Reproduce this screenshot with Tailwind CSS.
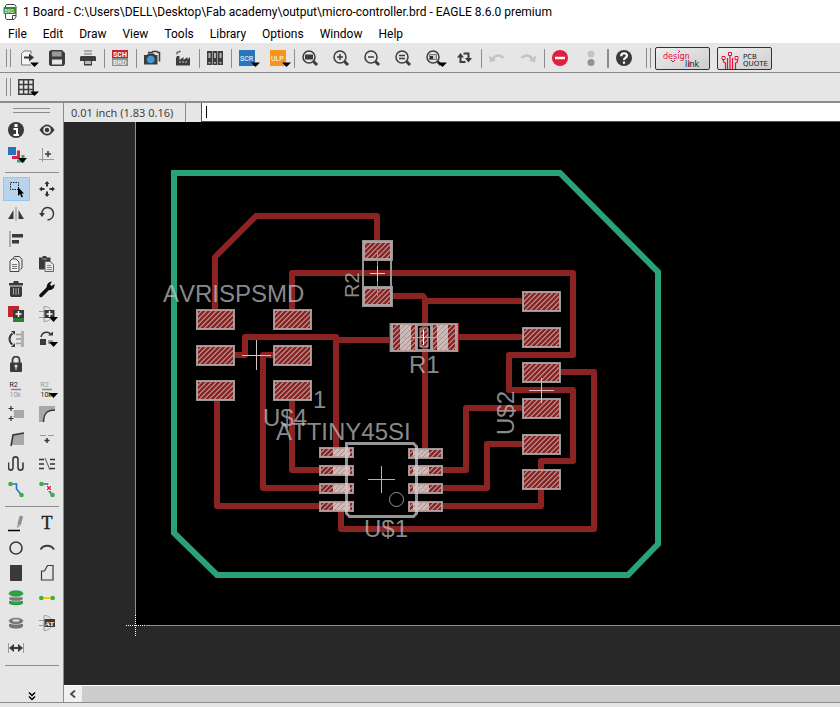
<!DOCTYPE html>
<html lang="en">
  <head>
    <meta charset="UTF-8" />
    <meta name="viewport" content="width=device-width, initial-scale=1.0" />
    <title>1 Board - EAGLE 8.6.0 premium</title>
    <script src="https://cdn.jsdelivr.net/npm/@tailwindcss/browser@4"></script>
  </head>

  <body class="flex flex-col h-screen overflow-hidden bg-[#e6e6e6] font-['Roboto','Open_Sans',sans-serif] text-xs text-black">
    <!-- Title bar -->
    <header class="flex items-center h-6 gap-1 pl-[3px] bg-white shrink-0">
      <svg class="w-4 h-[18px]" viewBox="0 0 16 18">
        <path d="M3.5 1.5h8l1.500 1.500v11l-2 2.500h-7.500l-1-1.500v-12z" fill="#fff" stroke="#444" />
        <path d="M9.500 16v-3.500h3.500" fill="none" stroke="#444" />
        <rect x="0.500" y="4" width="12.500" height="7" rx="1" fill="#2e8b33" />
        <text x="1.500" y="9.500" font-size="5" font-weight="bold" fill="#cfe8cf">BRD</text>
      </svg>
      <h1 class="whitespace-nowrap">1 Board - C:\Users\DELL\Desktop\Fab academy\output\micro-controller.brd - EAGLE 8.6.0 premium</h1>
    </header>

    <!-- Menu -->
    <nav class="flex items-center h-[19px] gap-4 pl-2 bg-white shrink-0">
      <button>File</button>
      <button>Edit</button>
      <button>Draw</button>
      <button>View</button>
      <button>Tools</button>
      <button>Library</button>
      <button>Options</button>
      <button>Window</button>
      <button>Help</button>
    </nav>

    <!-- Shared symbols -->
    <svg class="absolute w-0 h-0">
      <defs>
        <path id="drop" d="M12 12.500h9l-4.500 4.500z" fill="#000" />
        <g id="lens">
          <circle cx="7" cy="7" r="6" fill="none" stroke="#3c3c3c" stroke-width="1.500" />
          <path d="M11.500 11.500l3.500 3.500" stroke="#3c3c3c" stroke-width="3" />
        </g>
      </defs>
    </svg>

    <!-- Action toolbar -->
    <div class="flex h-[30px] border-b border-[#8c8c8c] shrink-0">
      <div class="w-[5px] h-[18px] ml-[6px] mt-[6px] border-x border-[#8c8c8c]"></div>
      <button aria-label="Open" class="w-[31px] pl-[7px] pt-[2px]">
        <svg class="w-[22px] h-[18px] overflow-visible" viewBox="0 0 22 18">
          <path d="M13 4v-3h-7l-2.500 2.500v11.500h9.500" fill="#f4f4f4" stroke="#777" />
          <path d="M6 7.500h6" stroke="#333" stroke-width="2" /><path d="M11 3.500l5 4-5 4z" fill="#333" />
          <use href="#drop" />
        </svg>
      </button>
      <button aria-label="Save" class="w-[31px] pl-[7px] pt-[2px]">
        <svg class="w-[22px] h-[18px]" viewBox="0 0 22 18">
          <path d="M2 0h11l3 3v11l-1.500 2h-13l-1.500-1.500v-13z" fill="#3c3c3c" />
          <path d="M3 1.500h9.500v5h-9.500z" fill="#9a9a9a" /><path d="M3 9.500h10v5h-10z" fill="#e6e6e6" />
        </svg>
      </button>
      <button aria-label="Print" class="w-[31px] pl-[7px] pt-[2px]">
        <svg class="w-[22px] h-[18px]" viewBox="0 0 22 18">
          <path d="M4 0h8v5h-8z" fill="#aaa" /><path d="M4 2.500h8" stroke="#ddd" />
          <path d="M1 6h14l1 1v4h-16v-4z" fill="#3c3c3c" /><path d="M4 10h8v5.500h-8z" fill="#3c3c3c" />
          <path d="M5 11h6v3h-6z" fill="#bbb" />
        </svg>
      </button>
      <div class="w-px h-[19px] mt-[6px] bg-[#8c8c8c]"></div>
      <button aria-label="Schematic" class="w-[31px] pl-[7px] pt-[2px]">
        <svg class="w-[22px] h-[18px]" viewBox="0 0 22 18">
          <path d="M0 0h16v8h-16z" fill="#c8202e" /><path d="M0 8h16v8h-16z" fill="#8f8f8f" />
          <text x="1" y="7" font-size="7" font-weight="bold" fill="#fff">SCH</text>
          <text x="1" y="15" font-size="7" font-weight="bold" fill="#eee">BRD</text>
        </svg>
      </button>
      <div class="w-px h-[19px] mt-[6px] bg-[#8c8c8c]"></div>
      <button aria-label="CAM snapshot" class="w-[31px] pl-[7px] pt-[2px]">
        <svg class="w-[22px] h-[18px]" viewBox="0 0 22 18">
          <path d="M4 2.500h4l1-1h4l1 1h1.500v9" fill="none" stroke="#3c3c3c" stroke-width="1.500" />
          <path d="M0 5h3l1-1.500h6l1 1.500h2.500v9.500h-13.500z" fill="#3c3c3c" />
          <circle cx="6.700" cy="9.500" r="3.800" fill="#3c9bd8" />
        </svg>
      </button>
      <button aria-label="CAM processor" class="w-[31px] pl-[7px] pt-[2px]">
        <svg class="w-[22px] h-[18px]" viewBox="0 0 22 18">
          <path d="M1 15.500v-7.500l1-2h2.500v4l4-3v3l4-3v2.500l2.500-2.500v8.500z" fill="#3c3c3c" />
          <path d="M2 4.500v-2.500h3v-1.500" fill="none" stroke="#3c3c3c" />
          <path d="M4 12h2m1 0h2m1 0h2" stroke="#999" stroke-width="1.500" />
        </svg>
      </button>
      <div class="w-px h-[19px] mt-[6px] bg-[#8c8c8c]"></div>
      <button aria-label="Libraries" class="w-[31px] pl-[7px] pt-[2px]">
        <svg class="w-[22px] h-[18px]" viewBox="0 0 22 18">
          <path d="M0 1h5v14h-5zM5.500 1h5v14h-5zM11 1h5v14h-5z" fill="#3c3c3c" />
          <path d="M1.500 3h2v5h-2zM7 3h2v5h-2zM12.500 3h2v5h-2z" fill="#b4b4b4" />
          <path d="M1.500 12h2v1.500h-2zM7 12h2v1.500h-2zM12.500 12h2v1.500h-2z" fill="#b4b4b4" />
        </svg>
      </button>
      <div class="w-px h-[19px] mt-[6px] bg-[#8c8c8c]"></div>
      <button aria-label="Run script" class="w-[31px] pl-[7px] pt-[2px]">
        <svg class="w-[22px] h-[18px] overflow-visible" viewBox="0 0 22 18">
          <path d="M0 0h16v16h-16z" fill="#2a76bc" />
          <text x="1" y="11" font-size="7" fill="#fff">SCR</text>
          <use href="#drop" />
        </svg>
      </button>
      <button aria-label="Run ULP" class="w-[31px] pl-[7px] pt-[2px]">
        <svg class="w-[22px] h-[18px] overflow-visible" viewBox="0 0 22 18">
          <path d="M0 0h16v16h-16z" fill="#f7941d" />
          <text x="1" y="11" font-size="7" fill="#fff">ULP</text>
          <use href="#drop" />
        </svg>
      </button>
      <div class="w-px h-[19px] mt-[6px] bg-[#8c8c8c]"></div>
      <button aria-label="Zoom to fit" class="w-[31px] pl-[7px] pt-[2px]">
        <svg class="w-[22px] h-[18px]" viewBox="0 0 22 18"><use href="#lens" /><path d="M3 4.500h8v5h-8z" fill="#3c3c3c" /></svg>
      </button>
      <button aria-label="Zoom in" class="w-[31px] pl-[7px] pt-[2px]">
        <svg class="w-[22px] h-[18px]" viewBox="0 0 22 18"><use href="#lens" /><path d="M4 7h6M7 4v6" stroke="#3c3c3c" stroke-width="1.500" /></svg>
      </button>
      <button aria-label="Zoom out" class="w-[31px] pl-[7px] pt-[2px]">
        <svg class="w-[22px] h-[18px]" viewBox="0 0 22 18"><use href="#lens" /><path d="M4 7h6" stroke="#3c3c3c" stroke-width="1.500" /></svg>
      </button>
      <button aria-label="Redraw" class="w-[31px] pl-[7px] pt-[2px]">
        <svg class="w-[22px] h-[18px]" viewBox="0 0 22 18"><use href="#lens" /><path d="M4 5.500h6M4 8.500h6" stroke="#3c3c3c" stroke-width="1.500" /></svg>
      </button>
      <button aria-label="Zoom select" class="w-[31px] pl-[7px] pt-[2px]">
        <svg class="w-[22px] h-[18px] overflow-visible" viewBox="0 0 22 18">
          <use href="#lens" /><path d="M3.500 4.500h7v5h-7z" fill="#ccc" stroke="#777" /><path d="M4 6h3v3h-3z" fill="#333" />
          <use href="#drop" />
        </svg>
      </button>
      <button aria-label="Refresh" class="w-[31px] pl-[7px] pt-[2px]">
        <svg class="w-[22px] h-[18px]" viewBox="0 0 22 18">
          <path d="M3.500 7v5h5M6.500 3.500h5v5" fill="none" stroke="#3c3c3c" stroke-width="2" />
          <path d="M0 7.500l3.500-4.500 3.500 4.500zM8 8l3.500 4.500 3.500-4.500z" fill="#3c3c3c" />
        </svg>
      </button>
      <div class="w-px h-[19px] mt-[6px] bg-[#8c8c8c]"></div>
      <button aria-label="Undo" class="w-[31px] pl-[7px] pt-[2px]">
        <svg class="w-[22px] h-[18px]" viewBox="0 0 22 18">
          <path d="M4 9c2-4 7-5 10.500-1" fill="none" stroke="#c3c3c3" stroke-width="2.500" /><path d="M0 5.500l1 7 6-2z" fill="#c3c3c3" />
        </svg>
      </button>
      <button aria-label="Redo" class="w-[31px] pl-[7px] pt-[2px]">
        <svg class="w-[22px] h-[18px]" viewBox="0 0 22 18">
          <path d="M1.500 8c3.500-4 8.500-3 10.500 1" fill="none" stroke="#c3c3c3" stroke-width="2.500" /><path d="M16 5.500l-1 7-6-2z" fill="#c3c3c3" />
        </svg>
      </button>
      <div class="w-px h-[19px] mt-[6px] bg-[#8c8c8c]"></div>
      <button aria-label="Stop" class="w-[31px] pl-[7px] pt-[2px]">
        <svg class="w-[22px] h-[18px]" viewBox="0 0 22 18"><circle cx="8" cy="8" r="8" fill="#e0203c" /><path d="M3 8h10" stroke="#fff" stroke-width="2.500" /></svg>
      </button>
      <button aria-label="Go" class="w-[31px] pl-[7px] pt-[2px]">
        <svg class="w-[22px] h-[18px]" viewBox="0 0 22 18"><circle cx="8" cy="4" r="3.500" fill="#c4c4c4" /><circle cx="8" cy="12.500" r="3.500" fill="#929292" /></svg>
      </button>
      <div class="w-[2px] h-[19px] mt-[6px] bg-[#8c8c8c]"></div>
      <button aria-label="Help" class="w-[31px] pl-[7px] pt-[2px]">
        <svg class="w-[22px] h-[18px]" viewBox="0 0 22 18">
          <circle cx="8" cy="8" r="8" fill="#3a3a3a" />
          <path d="M5.200 6.200c0-4 5.800-3.700 5.800-.5 0 2-3 2-3 4.300M8 11.500v2.300" fill="none" stroke="#fff" stroke-width="2.200" />
        </svg>
      </button>
      <div class="w-[5px] h-5 ml-[6px] mt-[5px] border-x border-[#8c8c8c]"></div>
      <button aria-label="design link" class="w-[55px] h-[23px] ml-1 mt-1 rounded-[2px] border border-[#333] bg-linear-to-br from-[#eee] to-[#ccc]">
        <svg class="w-[53px] h-[21px]" viewBox="0 0 53 21" font-family="DejaVu Sans">
          <text x="7" y="11" font-size="8" fill="#e0113a">design</text>
          <text x="29" y="19" font-size="8" fill="#111">link</text>
          <path d="M15 12l2 2 2-2M22.500 2.500l1.500 1.500M33 13v6" fill="none" stroke="#e0113a" />
        </svg>
      </button>
      <button aria-label="PCB quote" class="w-[55px] h-[23px] ml-[7px] mt-1 rounded-[2px] border border-[#333] bg-linear-to-br from-[#eee] to-[#ccc]">
        <svg class="w-[53px] h-[21px]" viewBox="0 0 53 21" font-family="DejaVu Sans">
          <path d="M5.500 12v2l2 1v6M9.500 21v-11M12 21v-13M14.500 21v-11M19.500 12v2l-2 1v6" fill="none" stroke="#e0113a" stroke-width="1.200" />
          <path d="M4 8.500h3v3h-3zM10.500 4.500h3v3h-3zM17 8.500h3v3h-3z" fill="#fff" stroke="#e0113a" />
          <text x="25" y="11" font-size="7" fill="#222">PCB</text>
          <text x="25" y="18" font-size="7" fill="#222">QUOTE</text>
        </svg>
      </button>
    </div>

    <!-- Parameter toolbar -->
    <div class="flex h-[30px] border-b-2 border-[#8c8c8c] shrink-0">
      <div class="w-[5px] h-[18px] ml-[6px] mt-[5px] border-x border-[#8c8c8c]"></div>
      <button aria-label="Grid" class="w-[31px] pl-[7px] pt-[2px]">
        <svg class="w-[22px] h-[18px] overflow-visible" viewBox="0 0 22 18">
          <path d="M.8 0v16M5.600 0v16M10.400 0v16M15.200 0v16M0 .8h16M0 5.600h16M0 10.400h16M0 15.200h16" stroke="#3c3c3c" stroke-width="1.500" />
          <use href="#drop" />
        </svg>
      </button>
    </div>

    <main class="flex flex-1 min-h-0">
      <!-- Command palette -->
      <aside class="flex flex-col w-16 pt-[5px] border-r border-[#8c8c8c] shrink-0">
        <div class="h-[5px] mx-[13px] border-y border-[#8c8c8c] shrink-0"></div>

        <div class="grid grid-cols-[27px_27px] auto-rows-[25px] gap-x-1 pl-[3px] mt-[5px]">
          <button aria-label="Info" class="pl-[5px]">
            <svg class="w-[22px] h-[18px]" viewBox="0 0 22 18"><circle cx="8" cy="8" r="8" fill="#3a3a3a" /><path d="M8 2v3" stroke="#fff" stroke-width="3" /><path d="M5.500 7h3.500v5.500M5.500 13h5.500" fill="none" stroke="#fff" stroke-width="2" /></svg>
          </button>
          <button aria-label="Show" class="pl-[5px]">
            <svg class="w-[22px] h-[18px]" viewBox="0 0 22 18"><path d="M0.500 8q7.500-11 15 0q-7.500 11-15 0" fill="#3a3a3a" /><circle cx="8" cy="8" r="3" fill="none" stroke="#e6e6e6" stroke-width="1.500" /></svg>
          </button>
          <button aria-label="Layers" class="pl-[5px]">
            <svg class="w-[22px] h-[18px] overflow-visible" viewBox="0 0 22 18">
              <path d="M9 14h6v-6" fill="none" stroke="#34a86a" stroke-width="3" /><path d="M4 10.500h6.500v-7" fill="none" stroke="#e0204c" stroke-width="3" />
              <path d="M0 0h8v8h-8z" fill="#2a72bc" /><path d="M10 11h9l-4.500 5z" />
            </svg>
          </button>
          <button aria-label="Mark" class="pl-[5px]">
            <svg class="w-[22px] h-[18px]" viewBox="0 0 22 18"><path d="M3.500 1v14M0 12.500h15" stroke="#999" /><path d="M9 4v6M6 7h6" stroke="#3a3a3a" stroke-width="1.500" /></svg>
          </button>
        </div>

        <div class="h-px my-1 ml-[5px] mr-1 bg-[#8c8c8c] shrink-0"></div>

        <div class="grid grid-cols-[27px_27px] auto-rows-[25px] gap-x-1 pl-[3px]">
          <button aria-label="Select" class="pl-1 h-6 border border-[#90c8f6] bg-[#b8d4ec]">
            <svg class="w-[22px] h-[18px]" viewBox="0 0 22 18"><path d="M2.500 2.500h8v7h-8z" fill="none" stroke="#222" stroke-dasharray="1.500 1" /><path d="M10 7v9l2-2 1.500 3.500 1.500-.7-1.500-3.300h2.500z" /></svg>
          </button>
          <button aria-label="Move" class="pl-[5px]">
            <svg class="w-[22px] h-[18px]" viewBox="0 0 22 18"><path d="M8 0l2.500 3h-1.500v2.500h-2v-2.500h-1.500zM8 16l2.500-3h-1.500v-2.500h-2v2.500h-1.500zM0 8l3-2.500v1.500h2.500v2h-2.500v1.500zM16 8l-3-2.500v1.500h-2.500v2h2.500v1.500z" fill="#333" /></svg>
          </button>
          <button aria-label="Mirror" class="pl-[5px]">
            <svg class="w-[22px] h-[18px]" viewBox="0 0 22 18"><path d="M0 13l5.500-9v9zM16 13l-5.500-9v9z" fill="#3a3a3a" /><path d="M8 1v14" stroke="#aaa" stroke-width="1.500" /></svg>
          </button>
          <button aria-label="Rotate" class="pl-[5px]">
            <svg class="w-[22px] h-[18px]" viewBox="0 0 22 18"><path d="M3 8.500c-.5-4 2-7 5.500-7s6 3 6 6-2 6-6 6.500" fill="none" stroke="#3a3a3a" stroke-width="1.500" /><path d="M0 7h6l-3 4z" fill="#3a3a3a" /></svg>
          </button>
          <button aria-label="Align" class="pl-[5px] col-span-2">
            <svg class="w-[22px] h-[18px]" viewBox="0 0 22 18"><path d="M2 0v16" stroke="#999" stroke-width="1.500" /><path d="M4 3h11v3.500h-11zM4 9h7v3.500h-7z" fill="#3a3a3a" /></svg>
          </button>
          <button aria-label="Copy" class="pl-[5px]">
            <svg class="w-[22px] h-[18px]" viewBox="0 0 22 18"><path d="M5 2.500l1.500-2h5l2.500 3v8.500l-1.500 1.500" fill="none" stroke="#444" /><path d="M2 5l2-2h4l3 3v9.500h-9z" fill="#f0f0f0" stroke="#444" /><path d="M4 8.500h5M4 10.500h5M4 12.500h5" stroke="#777" /></svg>
          </button>
          <button aria-label="Paste" class="pl-[5px]">
            <svg class="w-[22px] h-[18px]" viewBox="0 0 22 18"><path d="M0 1.500h3l1-1.500h3l1 1.500h3.500v12h-11.500z" fill="#3a3a3a" /><path d="M3 3h5" stroke="#999" /><path d="M6 5.500h5l3.500 3v7h-8.500z" fill="#e6e6e6" stroke="#666" /><path d="M8 9.500h4M8 11.500h5M8 13.500h5" stroke="#888" /></svg>
          </button>
          <button aria-label="Delete" class="pl-[5px]">
            <svg class="w-[22px] h-[18px]" viewBox="0 0 22 18"><path d="M1 2h4l1-2h4l1 2h4v2.500h-14zM2 5.500h12v9l-1 1.500h-10l-1-1.500z" fill="#3a3a3a" /><path d="M5.500 7v6.500M8 7v6.500M10.500 7v6.500" stroke="#aaa" /></svg>
          </button>
          <button aria-label="Change" class="pl-[5px]">
            <svg class="w-[22px] h-[18px]" viewBox="0 0 22 18"><path d="M2 14.500l8-8" stroke="#111" stroke-width="3.500" stroke-linecap="round" /><path d="M8 7.500c-1-3.500 1-6.500 5-7l-2 3 1.500 1.500 3-2c.5 4-2.500 6.500-6 6z" fill="#111" /></svg>
          </button>
          <button aria-label="Add" class="pl-[5px]">
            <svg class="w-[22px] h-[18px]" viewBox="0 0 22 18"><path d="M0 0h11v11h-11z" fill="#c0272d" /><path d="M5 9h11v7h-11z" fill="#2e8030" /><path d="M5 4h11v8h-11z" fill="#3a3a3a" /><path d="M10.500 5v6M7.500 8h6" stroke="#fff" stroke-width="1.500" /></svg>
          </button>
          <button aria-label="Invoke gate" class="pl-[5px]">
            <svg class="w-[22px] h-[18px] overflow-visible" viewBox="0 0 22 18"><path d="M0 5.500h6M0 11.500h6M5 .5v15c5 0 8-3 8-7.500s-3-7.500-8-7.500" fill="none" stroke="#999" /><path d="M5.500 4h10v8h-10z" fill="#3a3a3a" /><path d="M10.500 5v6M7.500 8h6" stroke="#fff" stroke-width="1.500" /><path d="M10 11h9l-4.500 5z" /></svg>
          </button>
          <button aria-label="Pinswap" class="pl-[5px]">
            <svg class="w-[22px] h-[18px]" viewBox="0 0 22 18"><path d="M4.500 2.500c-4 3-4 8 0 11" fill="none" stroke="#3a3a3a" stroke-width="2" /><path d="M3 0h4v4zM3 16h4v-4z" fill="#3a3a3a" /><path d="M8 3.500h5M8 8h5M8 12.500h5" stroke="#999" stroke-width="1.500" /><path d="M13 0h3v16h-3z" fill="#b0b0b0" /></svg>
          </button>
          <button aria-label="Replace" class="pl-[5px]">
            <svg class="w-[22px] h-[18px] overflow-visible" viewBox="0 0 22 18"><path d="M2 6c1.500-6 8-6 10-2" fill="none" stroke="#3a3a3a" stroke-width="1.500" /><path d="M9 4.500h5v-4z" fill="#3a3a3a" /><path d="M1 8h6v6h-6z" fill="#3a3a3a" /><path d="M9 9h5v4h-5z" fill="#999" /><path d="M10 11h9l-4.500 5z" /></svg>
          </button>
          <button aria-label="Lock" class="pl-[5px] col-span-2">
            <svg class="w-[22px] h-[18px]" viewBox="0 0 22 18"><path d="M4.500 8v-4c0-4.500 7-4.500 7 0v4" fill="none" stroke="#3a3a3a" stroke-width="1.800" /><rect x="2" y="6.500" width="12" height="9.500" rx="1" fill="#3a3a3a" /><circle cx="8" cy="10" r="1.500" fill="#ddd" /><path d="M8 10v4" stroke="#ddd" /></svg>
          </button>
          <button aria-label="Name" class="pl-[5px]">
            <svg class="w-[22px] h-[18px]" viewBox="0 0 22 18"><text x="1.500" y="6" font-size="7" fill="#222">R2</text><path d="M3 8.500h10" stroke="#888" stroke-width="1.500" /><text x="1.500" y="16" font-size="7" fill="#999">10k</text></svg>
          </button>
          <button aria-label="Value" class="pl-[5px]">
            <svg class="w-[22px] h-[18px] overflow-visible" viewBox="0 0 22 18"><text x="1.500" y="6" font-size="7" fill="#999">R2</text><path d="M3 8.500h10" stroke="#888" stroke-width="1.500" /><text x="1.500" y="16" font-size="7" fill="#222">10k</text><path d="M10 12h9l-4.500 5z" /></svg>
          </button>
          <button aria-label="Smash" class="pl-[5px]">
            <svg class="w-[22px] h-[18px]" viewBox="0 0 22 18"><path d="M3 0v5M.5 2.500h5M3 10v5M.5 12.500h5" stroke="#333" stroke-width="1.200" /><path d="M6 4h10v8h-10z" fill="#aba7a7" /><path d="M5 5.500h11M5 10.500h11" stroke="#aba7a7" stroke-dasharray="2 1" /></svg>
          </button>
          <button aria-label="Miter" class="pl-[5px]">
            <svg class="w-[22px] h-[18px]" viewBox="0 0 22 18"><path d="M0 0h16v4c-8 0-12 3-12 12h-4z" fill="#aba7a7" /><path d="M4.500 16c0-8 3-12 11.500-12" fill="none" stroke="#333" stroke-width="1.500" /></svg>
          </button>
          <button aria-label="Split" class="pl-[5px]">
            <svg class="w-[22px] h-[18px]" viewBox="0 0 22 18"><path d="M5 4l11-2v12h-13z" fill="#aba7a7" /><path d="M3 15l2-11 11-2" fill="none" stroke="#333" stroke-width="1.500" /></svg>
          </button>
          <button aria-label="Optimize" class="pl-[5px]">
            <svg class="w-[22px] h-[18px]" viewBox="0 0 22 18"><path d="M1 4.500h6M9 4.500h6" stroke="#999" /><path d="M8 7v5M5.500 9.500h5" stroke="#333" stroke-width="1.500" /></svg>
          </button>
          <button aria-label="Meander" class="pl-[5px]">
            <svg class="w-[22px] h-[18px]" viewBox="0 0 22 18"><path d="M.5 6.500v5c0 3.500 4.500 3.500 4.500 0v-8c0-3.500 5-3.500 5 0v8c0 3.500 5 3.500 5 0v-5" fill="none" stroke="#3a3a3a" stroke-width="1.600" /></svg>
          </button>
          <button aria-label="Differential pair" class="pl-[5px]">
            <svg class="w-[22px] h-[18px]" viewBox="0 0 22 18"><path d="M0 3.500h5M0 8h5M0 12.500h5M11 3.500h5M11 8h5M11 12.500h5" stroke="#333" stroke-width="1.300" /><path d="M6 2l5 12" stroke="#555" /></svg>
          </button>
          <button aria-label="Route" class="pl-[5px]">
            <svg class="w-[22px] h-[18px]" viewBox="0 0 22 18"><path d="M2 3h6.500v5l5 6" fill="none" stroke="#2a72bc" stroke-width="1.600" /><circle cx="2.500" cy="3" r="2.300" fill="#3fae3f" /><circle cx="13.500" cy="14" r="2.300" fill="#3fae3f" /></svg>
          </button>
          <button aria-label="Ripup" class="pl-[5px]">
            <svg class="w-[22px] h-[18px]" viewBox="0 0 22 18"><path d="M2 3h6.500v5l5 6" fill="none" stroke="#2a72bc" stroke-width="1.600" /><path d="M7 4h6v6h-6z" fill="#fff" /><path d="M8 5l4 4M12 5l-4 4" stroke="#e0203c" stroke-width="1.600" /><circle cx="2.500" cy="3" r="2.300" fill="#3fae3f" /><circle cx="13.500" cy="14" r="2.300" fill="#3fae3f" /></svg>
          </button>
        </div>

        <div class="h-px my-1 ml-[5px] mr-1 bg-[#8c8c8c] shrink-0"></div>

        <div class="grid grid-cols-[27px_27px] auto-rows-[25px] gap-x-1 pl-[3px]">
          <button aria-label="Line" class="pl-[5px]">
            <svg class="w-[22px] h-[18px]" viewBox="0 0 22 18"><path d="M13.500 1l-2.500 9" stroke="#8f8f8f" stroke-width="3.500" /><path d="M9.500 10l2 1-2 2z" fill="#777" /><path d="M0 15.500h12" stroke="#000" stroke-width="1.500" /></svg>
          </button>
          <button aria-label="Text" class="pl-[5px]">
            <svg class="w-[22px] h-[18px]" viewBox="0 0 22 18"><text x="8" y="14" font-size="18" font-family="Liberation Serif" text-anchor="middle" fill="#222" stroke="#222" stroke-width=".4">T</text></svg>
          </button>
          <button aria-label="Circle" class="pl-[5px]">
            <svg class="w-[22px] h-[18px]" viewBox="0 0 22 18"><circle cx="8" cy="8" r="6" fill="none" stroke="#3a3a3a" stroke-width="1.600" /></svg>
          </button>
          <button aria-label="Arc" class="pl-[5px]">
            <svg class="w-[22px] h-[18px]" viewBox="0 0 22 18"><path d="M1.500 9.500c3-5 10.500-5 13.500 0" fill="none" stroke="#3a3a3a" stroke-width="2" /></svg>
          </button>
          <button aria-label="Rect" class="pl-[5px]">
            <svg class="w-[22px] h-[18px]" viewBox="0 0 22 18"><path d="M2 0h12v16h-12z" fill="#3a3a3a" /></svg>
          </button>
          <button aria-label="Polygon" class="pl-[5px]">
            <svg class="w-[22px] h-[18px]" viewBox="0 0 22 18"><path d="M2.500 15v-9h3l3-5.500h5.500v14.500z" fill="none" stroke="#3a3a3a" stroke-width="1.200" /></svg>
          </button>
          <button aria-label="Via" class="pl-[5px]">
            <svg class="w-[22px] h-[18px]" viewBox="0 0 22 18"><path d="M1 11v2c0 3 14 3 14 0v-2z" fill="#2f9e44" /><path d="M1 7v2c0 3 14 3 14 0v-2z" fill="#777" stroke="#e6e6e6" stroke-width=".6" /><ellipse cx="8" cy="3.500" rx="7.500" ry="3.500" fill="#2f9e44" stroke="#e6e6e6" stroke-width=".5" /></svg>
          </button>
          <button aria-label="Signal" class="pl-[5px]">
            <svg class="w-[22px] h-[18px]" viewBox="0 0 22 18"><path d="M2 8h12" stroke="#f8c800" stroke-width="2" /><circle cx="2.300" cy="8" r="2.300" fill="#3fae3f" /><circle cx="13.700" cy="8" r="2.300" fill="#3fae3f" /></svg>
          </button>
          <button aria-label="Hole" class="pl-[5px]">
            <svg class="w-[22px] h-[18px]" viewBox="0 0 22 18"><path d="M1 9v2c0 3.500 14 3.500 14 0v-2z" fill="#777" /><ellipse cx="8" cy="6" rx="7.500" ry="3.500" fill="#777" stroke="#e6e6e6" stroke-width=".6" /><ellipse cx="8" cy="5.500" rx="3.500" ry="1.200" fill="#ddd" /></svg>
          </button>
          <button aria-label="Attribute" class="pl-[5px]">
            <svg class="w-[22px] h-[18px]" viewBox="0 0 22 18"><path d="M0 5.500h6M0 10.500h6M5 .5v15c5 0 8-3 8-7.500s-3-7.500-8-7.500" fill="none" stroke="#999" /><path d="M5.500 4h10.500v8h-10.500z" fill="#3a3a3a" /><text x="6" y="11" font-size="7" font-family="Liberation Serif" font-weight="bold" fill="#fff">AT</text></svg>
          </button>
          <button aria-label="Dimension" class="pl-[5px] col-span-2">
            <svg class="w-[22px] h-[18px]" viewBox="0 0 22 18"><path d="M.5 3v10M15.500 3v10" stroke="#999" /><path d="M4 8h8" stroke="#3a3a3a" stroke-width="2" /><path d="M1 8l5-4v8zM15 8l-5-4v8z" fill="#3a3a3a" /></svg>
          </button>
        </div>

        <div class="h-px mt-1 ml-[5px] mr-1 bg-[#8c8c8c] shrink-0"></div>
        <button aria-label="More" class="mt-auto mb-px self-center">
          <svg class="w-2 h-[9px]" viewBox="0 0 8 9"><path d="M1 .5l3 3 3-3M1 4.500l3 3 3-3" fill="none" stroke="#000" stroke-width="1.500" /></svg>
        </button>
      </aside>

      <section class="flex flex-col flex-1 min-w-0">
        <!-- Coordinates and command line -->
        <div class="flex h-[19px] shrink-0">
          <label for="command" class="w-[122px] pl-[7px] border-r border-[#8c8c8c] font-['Noto_Sans',sans-serif] text-[11px] leading-[20px] text-[#444] whitespace-nowrap">0.01 inch (1.83 0.16)</label>
          <div class="flex items-center flex-1 min-w-0 ml-[15px] pl-1 bg-white border-l border-b border-[#555]">
            <span class="w-px h-3 bg-black"></span>
            <input id="command" type="text" class="flex-1 min-w-0 h-full outline-none" />
          </div>
        </div>

        <!-- Board -->
        <svg class="flex-1 w-full min-h-0 bg-[#282828]" font-family="Liberation Sans">
          <defs>
            <pattern id="hatch" width="5" height="5" patternUnits="userSpaceOnUse">
              <rect width="5" height="5" fill="#b99c9c" />
              <path d="M-1 6L6 -1M-1 1L1 -1M4 6L6 4" stroke="#8b2323" stroke-width="2.400" />
            </pattern>
            <pattern id="hatch-light" width="5" height="5" patternUnits="userSpaceOnUse">
              <rect width="5" height="5" fill="#cbbcbc" />
              <path d="M-1 6L6 -1" stroke="#b48a8a" stroke-width="1" />
            </pattern>
            <g id="pad">
              <rect x=".5" y=".5" width="38" height="20" fill="#b99c9c" stroke="#969696" />
              <rect x="2" y="2" width="35" height="17" fill="url(#hatch)" />
            </g>
            <g id="pin">
              <rect x=".5" y=".5" width="34" height="10" fill="#b99c9c" stroke="#969696" />
              <rect x="2" y="2" width="31" height="7" fill="url(#hatch)" />
            </g>
            <g id="chip">
              <rect x=".5" y=".5" width="30" height="20" fill="#b99c9c" stroke="#969696" />
              <rect x="3" y="3" width="25" height="15" fill="url(#hatch)" />
            </g>
          </defs>

          <g transform="translate(-64 -122)">
            <rect x="136" y="122" width="100%" height="503" />
            <path d="M135.500 122v493M146 625.500h3000" stroke="#c8861e" />
            <path d="M126 625.500h20M135.500 615v21" stroke="#fff" stroke-dasharray="1 1" />

            <!-- Outline -->
            <path d="M174 173H560L658 272V544L628 575H217L174 533Z" fill="none" stroke="#2aa17a" stroke-width="6" />

            <!-- Traces -->
            <g fill="none" stroke="#8b2323" stroke-width="6" stroke-linejoin="round">
              <path d="M377 242V216H256L215 257V310" />
              <path d="M292 310V273H573V355H509V390H573V461H541V506H442" />
              <path d="M391 296H423L426 301H523M425 299V450" />
              <path d="M457 337H523M336 340H391" />
              <path d="M234 355H245V337H336V450" />
              <path d="M274 355H263V488H322" />
              <path d="M292 400V470H322" />
              <path d="M217 400V506H322" />
              <path d="M341 510V529H594V372H560" />
              <path d="M442 470H466V408H523" />
              <path d="M442 488H487V444H523" />
            </g>

            <!-- Header pads -->
            <use href="#pad" x="196" y="309" /><use href="#pad" x="196" y="345" /><use href="#pad" x="196" y="380" />
            <use href="#pad" x="273" y="309" /><use href="#pad" x="273" y="345" /><use href="#pad" x="273" y="380" />
            <use href="#pad" x="522" y="291" /><use href="#pad" x="522" y="327" /><use href="#pad" x="522" y="362" />
            <use href="#pad" x="522" y="398" /><use href="#pad" x="522" y="434" /><use href="#pad" x="522" y="469" />

            <!-- ATtiny -->
            <use href="#pin" x="319" y="447" /><use href="#pin" x="319" y="465" /><use href="#pin" x="319" y="483" /><use href="#pin" x="319" y="501" />
            <use href="#pin" x="408" y="448" /><use href="#pin" x="408" y="465" /><use href="#pin" x="408" y="483" /><use href="#pin" x="408" y="501" />
            <path d="M333 449h17v7h-17zM333 467h17v7h-17zM333 485h17v7h-17zM333 503h17v7h-17zM413 450h16v7h-16zM413 467h16v7h-16zM413 485h16v7h-16zM413 503h16v7h-16z" fill="url(#hatch-light)" />
            <path d="M346.500 443.500H413.500L416.500 446.500V513.500L413.500 516.500H349.500L346.500 513.500Z" fill="none" stroke="#969696" stroke-width="3" />
            <path d="M346.500 447v11m0 7v11m0 7v11m0 7v11M416.500 448v11m0 6v11m0 7v11m0 7v11" stroke="#cbc4c4" stroke-width="3" />
            <path d="M368 479.500h27M381.500 466v27" stroke="#b4b4b4" />
            <circle cx="396.500" cy="499.500" r="7" fill="none" stroke="#969696" />

            <!-- R2 -->
            <use href="#chip" x="362" y="240" /><use href="#chip" x="362" y="286" />
            <path d="M363 261v25M391 261v25" stroke="#969696" stroke-width="2" />
            <path d="M377.500 250v46" stroke="#b09a40" />
            <path d="M370 273.500h15M377.500 266v15" stroke="#e0cccc" />

            <!-- R1 -->
            <rect x="389.500" y="323.500" width="69" height="28" fill="none" stroke="#8b2323" />
            <path d="M410 324.500h27v26h-27z" fill="none" stroke="#969696" stroke-width="3" />
            <rect x="390.500" y="323.500" width="27" height="28" fill="#b99c9c" stroke="#969696" />
            <rect x="430.500" y="323.500" width="27" height="28" fill="#b99c9c" stroke="#969696" />
            <path d="M393 325h22v25h-22zM433 325h22v25h-22z" fill="url(#hatch)" />
            <path d="M400 325h11v25h-11zM437 325h11v25h-11z" fill="url(#hatch-light)" />
            <path d="M420 328h8v19h-8z" fill="url(#hatch)" stroke="#aaa" />
            <path d="M403 337.500h41" stroke="#b8b45a" />
            <path d="M423.500 330v15" stroke="#fff" />

            <path d="M242 355.500h29M256.500 340v30M529 390.500h25M541.500 378v25" stroke="#d0c4c4" />

            <!-- Names and values -->
            <g class="[font-kerning:none]" fill="#c8c8c8" fill-opacity=".7" font-size="24">
              <text x="163" y="302">AVRISPSMD</text>
              <text x="263" y="426">U$4</text>
              <text x="313" y="408">1</text>
              <text x="276" y="440">ATTINY45SI</text>
              <text x="364" y="537">U$1</text>
              <text x="409" y="373">R1</text>
              <text transform="translate(359 298) rotate(-90)" font-size="20">R2</text>
              <text transform="translate(514 435) rotate(-90)">U$2</text>
            </g>
          </g>
        </svg>

        <!-- Horizontal scrollbar -->
        <div class="flex h-[17px] border-t border-white bg-[#cdcdcd] shrink-0">
          <button aria-label="Scroll left" class="flex items-center justify-center w-[18px] bg-[#f0f0f0]">
            <svg class="w-2 h-2" viewBox="0 0 8 8"><path d="M6 .5l-4 3.500 4 3.500" fill="none" stroke="#444" stroke-width="1.800" /></svg>
          </button>
        </div>
      </section>
    </main>

    <!-- Status bar -->
    <footer class="h-[5px] border-t border-[#8c8c8c] shrink-0"></footer>
  </body>
</html>
